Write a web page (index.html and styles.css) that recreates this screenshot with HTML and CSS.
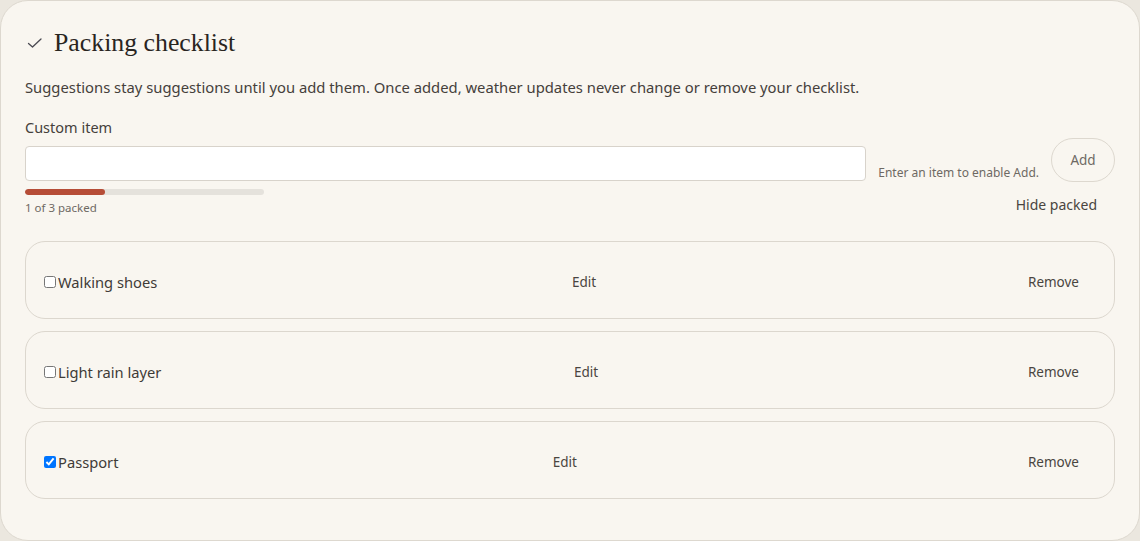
FILE: index.html
```html
<!DOCTYPE html>
<html lang="en">
<head>
<meta charset="utf-8">
<title>Packing checklist</title>
<link rel="stylesheet" href="styles.css">
</head>
<body>
<section class="card">
  <h2 class="title">
    <svg class="title-icon" width="16" height="16" viewBox="0 0 16 16" aria-hidden="true"><path d="M1.5 8.5 L5.5 12 L14 4" fill="none" stroke="#4b4a52" stroke-width="1.3" stroke-linecap="round" stroke-linejoin="round"/></svg>
    <span>Packing checklist</span>
  </h2>
  <p class="desc">Suggestions stay suggestions until you add them. Once added, weather updates never change or remove your checklist.</p>
  <div class="add-row">
    <label class="field">
      <span class="field-label">Custom item</span>
      <input class="field-input" type="text">
    </label>
    <span class="hint">Enter an item to enable Add.</span>
    <button class="add-btn" type="button">Add</button>
  </div>
  <div class="progress-row">
    <div class="progress">
      <div class="track"><div class="fill" style="width:33.33%"></div></div>
      <span class="progress-text">1 of 3 packed</span>
    </div>
    <button class="text-btn hide-btn" type="button">Hide packed</button>
  </div>
  <ul class="items">
    <li class="item">
      <label class="item-label"><input type="checkbox" class="cb"><span>Walking shoes</span></label>
      <button class="text-btn" type="button">Edit</button>
      <button class="text-btn" type="button">Remove</button>
    </li>
    <li class="item">
      <label class="item-label"><input type="checkbox" class="cb"><span>Light rain layer</span></label>
      <button class="text-btn" type="button">Edit</button>
      <button class="text-btn" type="button">Remove</button>
    </li>
    <li class="item">
      <label class="item-label"><input type="checkbox" class="cb" checked><span>Passport</span></label>
      <button class="text-btn" type="button">Edit</button>
      <button class="text-btn" type="button">Remove</button>
    </li>
  </ul>
</section>
</body>
</html>
```

FILE: styles.css
```css
* { box-sizing: border-box; }
html, body { margin: 0; background: #ebe7df; }
body {
  font-family: "Noto Sans", "Liberation Sans", sans-serif;
  color: #3f3b37;
}
.card {
  width: 1140px;
  height: 541px;
  background: #f9f6f0;
  border: 1px solid #ddd8cf;
  border-radius: 28px;
  padding: 27px 24px 0 24px;
}
.title {
  display: flex;
  align-items: center;
  gap: 11px;
  margin: 0;
  height: 30px;
  font-family: "Liberation Serif", "DejaVu Serif", serif;
  font-weight: 400;
  font-size: 25.8px;
  color: #29251f;
}
.title-icon { margin-left: 2px; margin-top: -1px; }
.desc {
  margin: 18px 0 0;
  font-size: 14.8px;
  line-height: 22px;
  color: #45403b;
}
.add-row {
  display: flex;
  align-items: flex-end;
  margin-top: 18px;
}
.field {
  display: flex;
  flex-direction: column;
  flex: 1;
}
.field-label {
  font-size: 14.5px;
  line-height: 22px;
  color: #45403b;
}
.field-input {
  margin-top: 8px;
  height: 35px;
  border: 1px solid #d8d3cb;
  border-radius: 4px;
  background: #fff;
  font: inherit;
}
.hint {
  margin-left: 12px;
  font-size: 12px;
  line-height: 16px;
  color: #6e6963;
}
.add-btn {
  margin-left: 12px;
  width: 64px;
  height: 44px;
  border: 1px solid #ddd8cf;
  border-radius: 22px;
  background: transparent;
  font-family: inherit;
  font-size: 13.5px;
  color: #6e6963;
  margin-bottom: -1px;
}
.progress-row {
  display: flex;
  justify-content: space-between;
  align-items: flex-start;
  margin-top: 8px;
}
.progress { width: 239px; display: flex; flex-direction: column; }
.track {
  height: 6px;
  border-radius: 3px;
  background: #e5e2dc;
  overflow: hidden;
}
.fill { height: 100%; background: #b64d37; border-radius: 3px; }
.progress-text {
  margin-top: 5px;
  font-size: 11.5px;
  line-height: 16px;
  color: #6e6963;
}
.text-btn {
  border: 0;
  background: transparent;
  font-family: inherit;
  font-size: 13.5px;
  color: #4a4540;
  padding: 0 17px;
  cursor: pointer;
}
.hide-btn { margin-top: 5px; line-height: 22px; font-size: 14px; padding-right: 18px; }
.items {
  list-style: none;
  margin: 25px 0 0;
  padding: 0;
  display: flex;
  flex-direction: column;
  gap: 12px;
}
.item {
  display: flex;
  align-items: center;
  justify-content: space-between;
  height: 78px;
  border: 1px solid #dcd7ce;
  border-radius: 20px;
  padding: 3px 18px 0;
}
.item-label {
  display: flex;
  align-items: center;
  font-size: 14.7px;
  color: #3f3b37;
}
.cb { margin: 1px 2px 0 0; width: 12px; height: 12px; }
```
